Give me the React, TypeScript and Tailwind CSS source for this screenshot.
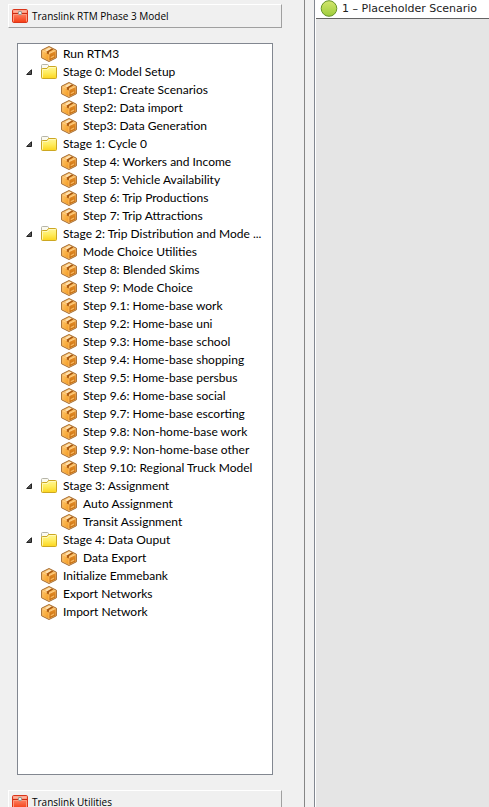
import React from "react";

type Kind = "tool" | "folder";
interface Item {
  label: string;
  kind: Kind;
  children?: Item[];
}

const tool = (label: string): Item => ({ label, kind: "tool" });
const folder = (label: string, names: string[]): Item => ({
  label,
  kind: "folder",
  children: names.map(tool),
});

const items: Item[] = [
  tool("Run RTM3"),
  folder("Stage 0: Model Setup", ["Step1: Create Scenarios", "Step2: Data import", "Step3: Data Generation"]),
  folder("Stage 1: Cycle 0", [
    "Step 4: Workers and Income",
    "Step 5: Vehicle Availability",
    "Step 6: Trip Productions",
    "Step 7: Trip Attractions",
  ]),
  folder("Stage 2: Trip Distribution and Mode ...", [
    "Mode Choice Utilities",
    "Step 8: Blended Skims",
    "Step 9: Mode Choice",
    "Step 9.1: Home-base work",
    "Step 9.2: Home-base uni",
    "Step 9.3: Home-base school",
    "Step 9.4: Home-base shopping",
    "Step 9.5: Home-base persbus",
    "Step 9.6: Home-base social",
    "Step 9.7: Home-base escorting",
    "Step 9.8: Non-home-base work",
    "Step 9.9: Non-home-base other",
    "Step 9.10: Regional Truck Model",
  ]),
  folder("Stage 3: Assignment", ["Auto Assignment", "Transit Assignment"]),
  folder("Stage 4: Data Ouput", ["Data Export"]),
  tool("Initialize Emmebank"),
  tool("Export Networks"),
  tool("Import Network"),
];

function Gradients() {
  return (
    <svg className="absolute size-0" aria-hidden="true">
      <defs>
        <linearGradient id="folderFill" x1="0" y1="0" x2="0" y2="1">
          <stop offset="0" stopColor="#fff79a" />
          <stop offset="0.5" stopColor="#ffec5e" />
          <stop offset="1" stopColor="#fcd51c" />
        </linearGradient>
        <linearGradient id="boxLeft" x1="0" y1="0" x2="1" y2="1">
          <stop offset="0" stopColor="#ffc466" />
          <stop offset="1" stopColor="#f39a22" />
        </linearGradient>
        <linearGradient id="boxRight" x1="0" y1="0" x2="0" y2="1">
          <stop offset="0" stopColor="#e8922a" />
          <stop offset="1" stopColor="#c06508" />
        </linearGradient>
        <linearGradient id="chestFill" x1="0" y1="0" x2="0" y2="1">
          <stop offset="0" stopColor="#ffa48c" />
          <stop offset="1" stopColor="#f63c12" />
        </linearGradient>
        <linearGradient id="dotFill" x1="0" y1="0" x2="0" y2="1">
          <stop offset="0" stopColor="#d3e66e" />
          <stop offset="1" stopColor="#9dcc3a" />
        </linearGradient>
      </defs>
    </svg>
  );
}

function BoxIcon() {
  return (
    <svg viewBox="0 0 16 16" className="size-4 shrink-0" aria-hidden="true">
      <path d="M8 .5 15.4 4.2v7.6L8 15.5.6 11.8V4.2z" fill="#ffd08a" />
      <path d="M1.4 4.9 7.7 8v6.6L1.4 11.4z" fill="url(#boxLeft)" />
      <path d="M14.6 4.9 8.3 8v6.6l6.3-3.2z" fill="url(#boxRight)" />
      <path d="M8 1.3 14.2 4.3 8 7.3 1.8 4.3z" fill="#f8bc62" />
      <path d="M8.2 1.4 10.8 2.6 6.4 5.4 4 4z" fill="#ffe3b4" />
      <path d="M10.8 2.6 12.4 3.6 8 6 7.8 8.6 5.8 7.4V5.6z" fill="#a9570f" />
      <path d="M9.6 11 13.2 9.2v1.5L9.6 12.5z" fill="#f4b660" />
      <path d="M8 .5 15.4 4.2v7.6L8 15.5.6 11.8V4.2z" fill="none" stroke="#9a5a1a" strokeWidth=".9" strokeLinejoin="round" />
    </svg>
  );
}

function FolderIcon() {
  return (
    <svg viewBox="0 0 16 16" className="size-4 shrink-0" aria-hidden="true">
      <path d="M.5 6V1.5q0-1 1-1h5q.8 0 1 1L8 3v2z" fill="#fbfaf0" stroke="#b5b4a8" />
      <path d="M.5 5.5q0-1 1-1H6l1.5-2h7q1 0 1 1v10q0 1-1 1h-13q-1 0-1-1z" fill="url(#folderFill)" stroke="#cca722" />
      <path d="M1.5 13.5V5.5h5L8 3.5h6.5" fill="none" stroke="#fffbc8" strokeWidth=".8" />
    </svg>
  );
}

function ChestIcon() {
  return (
    <svg viewBox="0 0 16 14" className="h-3.5 w-4 shrink-0" aria-hidden="true">
      <rect x=".5" y=".5" width="15" height="13" rx="1.2" fill="url(#chestFill)" stroke="#d9351a" />
      <path d="M1.5 1.5h13v2h-13z" fill="#ffb09a" />
      <path d="M1 4.5h14" stroke="#c92c12" />
      <path d="M1.5 5.5h13M1.5 5.5v7M14.5 5.5v7" stroke="#ff9a7e" fill="none" />
      <circle cx="8" cy="4" r="1.6" fill="#fff" stroke="#9a9c94" strokeWidth="1.1" />
    </svg>
  );
}

function Node({ item }: { item: Item }) {
  return (
    <li role="treeitem" aria-expanded={item.children ? true : undefined}>
      <div className="flex h-[18px] items-center">
        {item.children ? (
          <button type="button" aria-label={`Collapse ${item.label}`} className="flex w-5 shrink-0 justify-center pr-1">
            <svg viewBox="0 0 6 6" className="size-1.5" aria-hidden="true">
              <path d="M5.5.7v4.8H.7z" fill="#555" stroke="#222" strokeLinejoin="round" />
            </svg>
          </button>
        ) : (
          <span className="w-5 shrink-0" />
        )}
        {item.kind === "folder" ? <FolderIcon /> : <BoxIcon />}
        <span className="ml-1.5 whitespace-nowrap">{item.label}</span>
      </div>
      {item.children && (
        <ul role="group" className="pl-5">
          {item.children.map((c) => (
            <Node key={c.label} item={c} />
          ))}
        </ul>
      )}
    </li>
  );
}

function PanelButton({ label }: { label: string }) {
  return (
    <button
      type="button"
      className="flex h-6 w-full shrink-0 items-center gap-1 border border-t-white border-r-[#a0a0a0] border-b-[#a0a0a0] border-l-white bg-[#f0f0f0] px-[3px] font-['Open_Sans',sans-serif] text-[10px] leading-none whitespace-nowrap text-black"
    >
      <ChestIcon />
      {label}
    </button>
  );
}

export default function App() {
  return (
    <div className="flex h-screen overflow-hidden bg-[#f0f0f0] text-black">
      <Gradients />
      <aside className="flex w-[305px] shrink-0 flex-col border-r border-[#868686] pt-1 pr-[22px] pl-2">
        <PanelButton label="Translink RTM Phase 3 Model" />
        <ul
          role="tree"
          className="mx-[9px] my-[15px] min-h-0 flex-1 overflow-hidden border border-[#828790] bg-white pt-px pl-[3px] font-['Lato',sans-serif] text-xs leading-4"
        >
          {items.map((i) => (
            <Node key={i.label} item={i} />
          ))}
        </ul>
        <div className="h-[17px] shrink-0">
          <PanelButton label="Translink Utilities" />
        </div>
      </aside>
      <main className="ml-[9px] flex min-w-0 flex-1 flex-col border-l border-[#828790]">
        <div className="flex min-h-0 flex-1 flex-col border-l border-white bg-[#e5e5e5]">
          <header className="flex h-[19px] shrink-0 items-center border-b border-[#646464] bg-white pb-px pl-1 font-['DejaVu_Sans',Verdana,sans-serif] text-[11px] leading-4 whitespace-nowrap text-[#222]">
            <svg viewBox="0 0 18 18" className="mr-1 size-[18px] shrink-0" aria-hidden="true">
              <circle cx="9" cy="8.5" r="7.8" fill="url(#dotFill)" stroke="#669427" />
            </svg>
            1 – Placeholder Scenario
          </header>
        </div>
      </main>
    </div>
  );
}
